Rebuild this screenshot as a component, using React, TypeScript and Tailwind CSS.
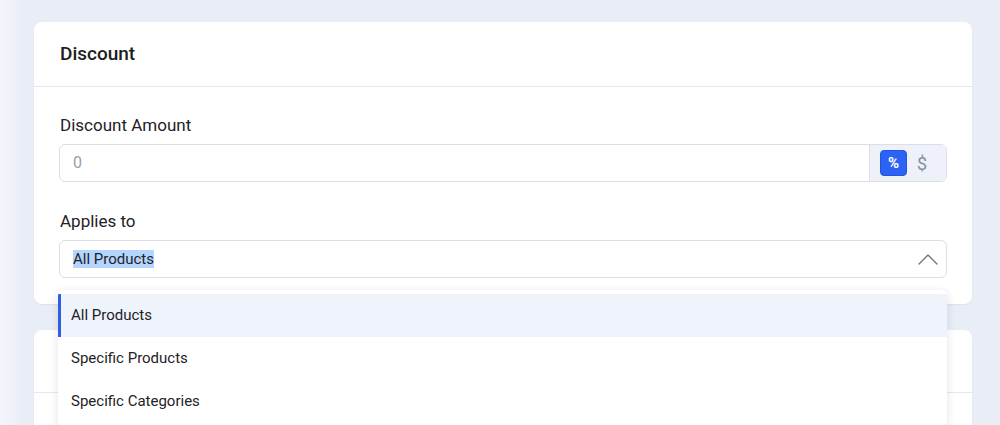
import React from "react";

export default function App() {
  return (
    <div
      className="min-h-[425px] h-[425px] overflow-hidden bg-[linear-gradient(to_right,#f4f6fb,#e9edf6_22px)] pl-[34px] pr-[28px] pt-[22px] flex flex-col gap-[26px]"
      style={{ fontFamily: "Roboto, 'Noto Sans', sans-serif" }}
    >
      <div className="relative z-10 bg-white rounded-[8px] shadow-[0_1px_2px_rgba(30,40,80,0.06)]">
        <div className="h-[65px] flex items-center px-[26px] border-b border-[#e6e8ed]">
          <h2 className="text-[19px] font-medium text-[#1b1d21]">Discount</h2>
        </div>
        <div className="px-[25px] pt-[26px] pb-[26px]">
          <label className="block ml-[1px] text-[17px] leading-[24px] text-[#1f2227]">Discount Amount</label>
          <div className="mt-[7px] h-[38px] flex rounded-[6px] border border-[#dcdfe5] overflow-hidden">
            <div className="flex-1 flex items-center pl-[13px] text-[16px] text-[#9aa0a8]">0</div>
            <div className="w-[77px] flex items-center gap-[10px] pl-[10px] bg-[#eef1f9] border-l border-[#dcdfe5]">
              <span className="w-[27px] h-[26px] rounded-[4px] bg-[#2d63f4] border border-[#2356de] text-white text-[15px] font-bold flex items-center justify-center">
                %
              </span>
              <span className="text-[18px] text-[#8a8f99]">$</span>
            </div>
          </div>
          <label className="block ml-[1px] mt-[27px] text-[17px] leading-[24px] text-[#1f2227]">Applies to</label>
          <div className="relative mt-[7px]">
            <div className="h-[38px] flex items-center justify-between rounded-[6px] border border-[#dcdfe5] pl-[13px] pr-[7px]">
              <span className="text-[15px] text-[#1f2227] bg-[#b4d5fe] leading-[18px]">All Products</span>
              <svg width="22" height="14" viewBox="0 0 22 14" fill="none">
                <path d="M2 12 L11 3 L20 12" stroke="#707479" strokeWidth="1.4" strokeLinecap="round" strokeLinejoin="round" />
              </svg>
            </div>
            <div className="absolute left-[-1px] right-0 top-[50px] bg-white rounded-[6px] shadow-[0_2px_10px_rgba(20,30,60,0.12)] py-[4px] overflow-hidden">
              <div className="h-[43px] flex items-center pl-[10px] bg-[#eff3fc] border-l-[3px] border-[#2f5fe0] text-[15px] text-[#1f2227]">
                All Products
              </div>
              <div className="h-[43px] flex items-center pl-[13px] text-[15px] text-[#1f2227]">Specific Products</div>
              <div className="h-[43px] flex items-center pl-[13px] text-[15px] text-[#1f2227]">Specific Categories</div>
            </div>
          </div>
        </div>
      </div>
      <div className="bg-white rounded-[8px] shadow-[0_1px_2px_rgba(30,40,80,0.06)] h-[200px] shrink-0">
        <div className="h-[63px] border-b border-[#e6e8ed]"></div>
      </div>
    </div>
  );
}
